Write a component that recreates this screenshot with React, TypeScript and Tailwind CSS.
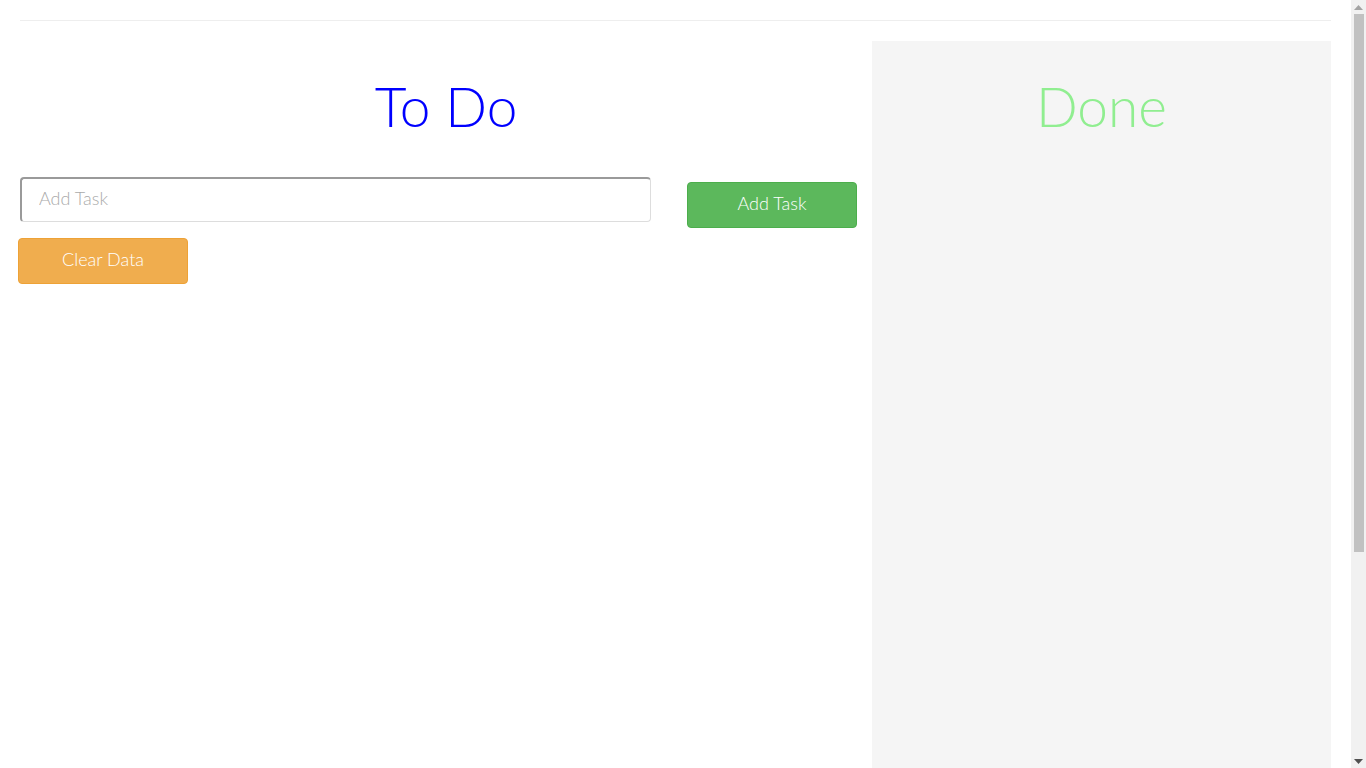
export default function App() {
  const font = { fontFamily: '"Lato", "Open Sans", sans-serif' };
  return (
    <div className="flex h-[768px] overflow-hidden bg-white" style={font}>
      <div className="min-w-0 flex-1 px-[20px] pt-[20px]">
        <div className="h-px w-full bg-[#eeeeee]" />
        <div className="mt-[20px] flex">
          <div className="w-[852px] shrink-0">
            <h1 className="pt-[32px] text-center text-[55px] font-light leading-[67px] text-[#0000ff]">To Do</h1>
            <div className="mt-[37px] flex items-start">
              <input
                placeholder="Add Task"
                className="h-[45px] w-[631px] rounded-[4px] border border-[#dddddd] border-t-[#9a9a9a] border-l-[#9a9a9a] border-t-2 border-l-2 px-[17px] pb-[4px] text-[18px] font-light text-[#555] placeholder:text-[#aaaaaa] outline-none"
              />
              <button className="ml-[36px] mt-[5px] h-[46px] w-[170px] rounded-[4px] border border-[#4cae4c] bg-[#5cb85c] pb-[4px] text-[18px] font-light text-white">
                Add Task
              </button>
            </div>
            <button className="-ml-[2px] mt-[10px] h-[46px] w-[170px] rounded-[4px] border border-[#eea236] bg-[#f0ad4e] pb-[4px] text-[18px] font-light text-white">
              Clear Data
            </button>
          </div>
          <div className="h-[1010px] flex-1 bg-[#f5f5f5]">
            <h2 className="pt-[32px] text-center text-[55px] font-light leading-[67px] text-[#90ee90]">Done</h2>
          </div>
        </div>
      </div>
      <div className="flex w-[15px] shrink-0 flex-col items-center bg-[#f1f1f1]">
        <div className="flex h-[14px] w-full items-center justify-center">
          <svg width="9" height="5" viewBox="0 0 9 5"><path d="M4.5 0 L9 5 L0 5 Z" fill="#a3a3a3" /></svg>
        </div>
        <div className="h-[538px] w-[10px] bg-[#c1c1c1]" />
        <div className="flex-1" />
        <div className="flex h-[14px] w-full items-center justify-center">
          <svg width="9" height="5" viewBox="0 0 9 5"><path d="M0 0 L9 0 L4.5 5 Z" fill="#505050" /></svg>
        </div>
      </div>
    </div>
  );
}
